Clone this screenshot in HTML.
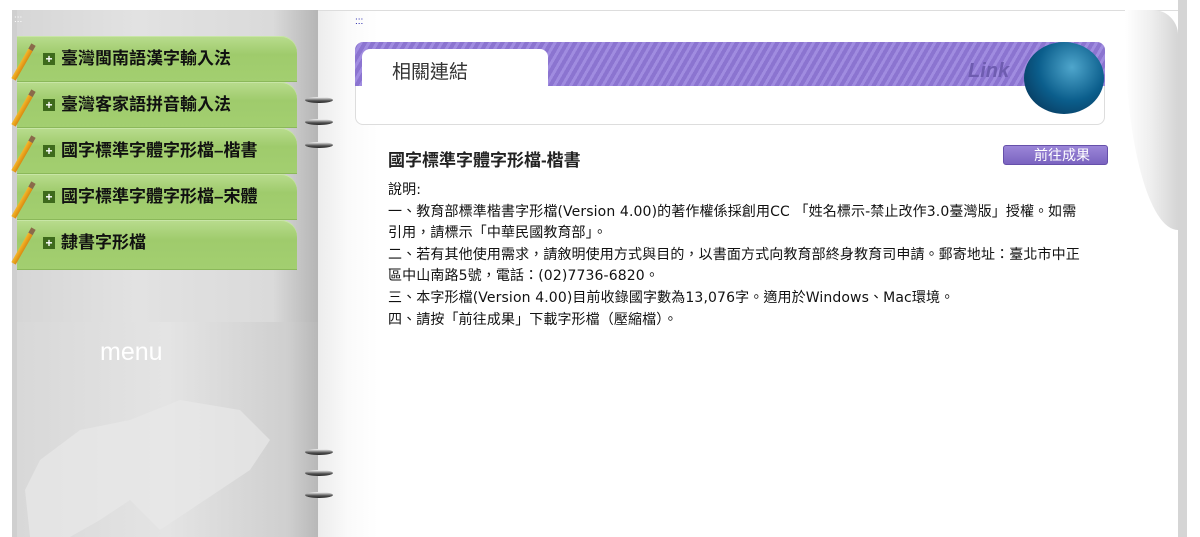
<!DOCTYPE html>
<html><head><meta charset="utf-8"><style>
*{margin:0;padding:0;box-sizing:border-box}
body{width:1200px;height:537px;overflow:hidden;background:#fff;position:relative;font-family:"Liberation Sans","Noto Sans CJK TC",sans-serif}
.abs{position:absolute}
#left{left:12px;top:10px;width:306px;height:527px;background:linear-gradient(90deg,#d6d6d6 0%,#e2e2e2 40%,#dadada 85%,#b5b5b5 100%);border-left:5px solid #cfcfcf}
#lbot{left:17px;top:322px;width:301px;height:215px;background:linear-gradient(90deg,#d8d8d8,#e4e4e4 50%,#cfcfcf 90%,#b8b8b8)}
.item{left:17px;width:280px;height:46px;border-radius:0 16px 0 0;background:linear-gradient(180deg,#b9dc8e,#9fcb6c 40%,#a3cf70);box-shadow:inset 0 1px 0 #c8e6a6,inset 0 -1px 0 #8bb85a;font-size:17px;font-weight:bold;color:#111;line-height:46px;padding-left:44px}
.item:before{content:"";position:absolute;left:4px;top:6px;width:5px;height:34px;background:linear-gradient(90deg,#f5b82a,#d98a10);transform:rotate(30deg);border-top:6px solid #8a6a4a}
.plus{position:absolute;left:26px;top:17px;width:12px;height:12px;background:#3e6a1c;color:#fff;font-size:12px;line-height:12px;text-align:center}
.ring{width:28px;height:6px;border-radius:50%;background:linear-gradient(180deg,#fff,#555 60%,#222);left:305px}
#page{left:318px;top:10px;width:860px;height:527px;background:linear-gradient(90deg,#ececec,#fafafa 30px,#fff 60px);border-top:1px solid #ddd}
#rb{left:1178px;top:0;width:9px;height:537px;background:#d5d5d5}
.txt{font-family:"DejaVu Sans","Noto Sans CJK TC",sans-serif}
</style></head><body>
<div id="left" class="abs"></div>
<div id="lbot" class="abs"></div>
<div class="abs" style="left:14px;top:14px;color:#fff;font-size:10px">:::</div>
<div class="abs" style="left:100px;top:338px;color:#fff;font-size:25px">menu</div>
<svg class="abs" style="left:20px;top:370px" width="260" height="167"><path d="M20 90 L60 60 L110 50 L160 30 L220 40 L250 70 L230 100 L200 120 L170 140 L140 160 L110 130 L80 150 L50 167 L10 167 L5 120Z" fill="#e8e8e8" opacity=".7"/></svg>
<div class="item abs" style="top:36px"><span class="plus">+</span>臺灣閩南語漢字輸入法</div>
<div class="item abs" style="top:82px"><span class="plus">+</span>臺灣客家語拼音輸入法</div>
<div class="item abs" style="top:128px"><span class="plus">+</span>國字標準字體字形檔–楷書</div>
<div class="item abs" style="top:174px"><span class="plus">+</span>國字標準字體字形檔–宋體</div>
<div class="item abs" style="top:220px;height:50px"><span class="plus">+</span>隸書字形檔</div>
<div id="page" class="abs"></div>
<div id="rb" class="abs"></div>
<div class="abs" style="left:1125px;top:10px;width:53px;height:220px;background:linear-gradient(90deg,#fff,#eee 50%,#d5d5d5);border-radius:0 25px 0 53px/0 25px 0 200px"></div>
<div class="ring abs" style="top:97px"></div><div class="ring abs" style="top:119px"></div><div class="ring abs" style="top:142px"></div>
<div class="ring abs" style="top:449px"></div><div class="ring abs" style="top:470px"></div><div class="ring abs" style="top:492px"></div>
<div class="abs" style="left:355px;top:16px;color:#22a;font-size:10px">:::</div>
<div class="abs" style="left:355px;top:42px;width:750px;height:83px;border:1px solid #ddd;border-radius:8px;background:#fff"></div>
<div class="abs" style="left:355px;top:42px;width:750px;height:44px;border-radius:8px 8px 0 0;background:repeating-linear-gradient(120deg,#8b74d0 0 4px,#a08ce0 4px 7px)"></div>
<div class="abs" style="left:362px;top:49px;width:186px;height:40px;background:#fff;border-radius:8px 8px 0 0;font-size:19px;color:#333;padding:8px 0 0 30px">相關連結</div>
<div class="abs" style="left:968px;top:60px;font-size:20px;font-weight:bold;font-style:italic;color:#6e5cb0">Link</div>
<div class="abs" style="left:1024px;top:42px;width:80px;height:72px;border-radius:50%;background:radial-gradient(circle at 60% 35%,#4fa6cc,#0b5e8c 50%,#062a4a)"></div>
<div class="abs" style="left:388px;top:146px;font-size:17px;font-weight:bold;color:#222">國字標準字體字形檔-楷書</div>
<div class="abs" style="left:1003px;top:145px;width:105px;height:20px;background:linear-gradient(#9b86d8,#7a63c0);border:1px solid #6650aa;border-radius:3px;color:#fff;font-size:14px;line-height:18px;padding-left:30px">前往成果</div>
<div class="abs txt" style="left:388px;top:180px;font-size:14px;line-height:21.6px;letter-spacing:0.12px;color:#111;white-space:pre">說明:
一、教育部標準楷書字形檔(Version 4.00)的著作權係採創用CC 「姓名標示-禁止改作3.0臺灣版」授權。如需
引用，請標示「中華民國教育部」。
二、若有其他使用需求，請敘明使用方式與目的，以書面方式向教育部終身教育司申請。郵寄地址：臺北市中正
區中山南路5號，電話：(02)7736-6820。
三、本字形檔(Version 4.00)目前收錄國字數為13,076字。適用於Windows、Mac環境。
四、請按「前往成果」下載字形檔（壓縮檔）。</div>
</body></html>
